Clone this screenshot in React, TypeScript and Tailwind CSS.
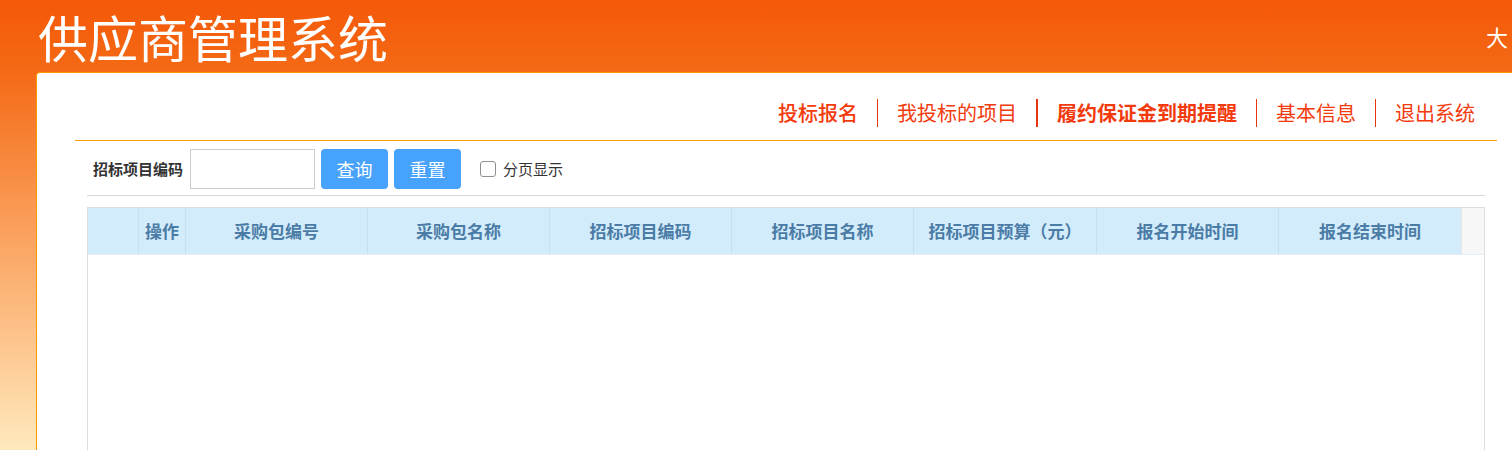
import React from 'react';

const navItems = [
  { label: '投标报名', weight: 'font-medium' },
  { label: '我投标的项目', weight: 'font-normal' },
  { label: '履约保证金到期提醒', weight: 'font-bold' },
  { label: '基本信息', weight: 'font-normal' },
  { label: '退出系统', weight: 'font-normal' },
];

const columns = [
  { label: '', width: 'w-[50px]' },
  { label: '操作', width: 'w-[47px]' },
  { label: '采购包编号', width: 'w-[182px]' },
  { label: '采购包名称', width: 'w-[182px]' },
  { label: '招标项目编码', width: 'w-[182px]' },
  { label: '招标项目名称', width: 'w-[182px]' },
  { label: '招标项目预算（元）', width: 'w-[183px]' },
  { label: '报名开始时间', width: 'w-[182px]' },
  { label: '报名结束时间', width: 'w-[183px]' },
];

const App: React.FC = () => {
  return (
    <div
      className="flex h-[450px] w-full flex-col overflow-hidden bg-[linear-gradient(to_bottom,#f45808_0%,#f46a16_16%,#fba664_55%,#fee9bd_100%)]"
      style={{ fontFamily: '"Noto Sans CJK SC", "Noto Sans", sans-serif' }}
    >
      {/* Header */}
      <div className="flex h-[72px] shrink-0 items-center">
        <h1 className="pl-[38px] text-[50px] leading-none font-normal text-white">
          供应商管理系统
        </h1>
        <div className="ml-auto pr-[4px] text-[22px] leading-none text-white">大</div>
      </div>

      {/* Main panel */}
      <div className="ml-[36px] flex-1 rounded-tl-[4px] border-t border-l border-[#fb9a00] bg-white">
        {/* Nav */}
        <div className="flex h-[67px] items-end justify-end pr-[37px] pb-[13px]">
          {navItems.map((item, i) => (
            <div
              key={item.label}
              className={`flex h-[28px] items-center px-[19px] text-[20px] leading-none text-[#f23a0c] ${
                i > 0 ? (i === 2 ? 'border-l-2 border-[#e8340f]' : 'border-l border-[#e8340f]') : ''
              } ${item.weight} ${i === navItems.length - 1 ? 'pr-0' : ''}`}
            >
              {item.label}
            </div>
          ))}
        </div>

        <div className="mr-[15px] ml-[38px] h-px bg-[#f8a100]" />

        {/* Search */}
        <div className="flex h-[54px] items-center pt-[2px] pl-[56px]">
          <span className="mr-[7px] text-[15px] font-bold text-[#333]">招标项目编码</span>
          <input
            type="text"
            className="h-[40px] w-[125px] border border-[#cccccc] bg-white px-2 outline-none"
          />
          <button className="ml-[6px] h-[40px] w-[67px] rounded-[4px] bg-[#47a2fb] text-[18px] text-white">
            查询
          </button>
          <button className="ml-[6px] h-[40px] w-[67px] rounded-[4px] bg-[#47a2fb] text-[18px] text-white">
            重置
          </button>
          <label className="ml-[19px] flex items-center text-[15px] text-[#333]">
            <span className="mr-[7px] inline-block h-[16px] w-[16px] rounded-[3px] border border-[#8f8f8f] bg-white" />
            分页显示
          </label>
        </div>

        <div className="mr-[27px] ml-[50px] h-px bg-[#d8d8d8]" />

        {/* Table */}
        <div className="mt-[11px] mr-[27px] ml-[50px] h-[300px] border-x border-t border-[#dddddd]">
          <div className="flex h-[47px] border-b border-[#e3eef6]">
            {columns.map((col, i) => (
              <div
                key={i}
                className={`${col.width} flex shrink-0 items-center justify-center bg-[#d3ecfc] text-[17px] font-bold text-[#4b7ca6] ${
                  i > 0 ? 'border-l border-[#c4e0f2]' : ''
                }`}
              >
                {col.label}
              </div>
            ))}
            <div className="flex-1 border-l border-[#e6e6e6] bg-[#f7f7f7]" />
          </div>
        </div>
      </div>
    </div>
  );
};

export default App;
